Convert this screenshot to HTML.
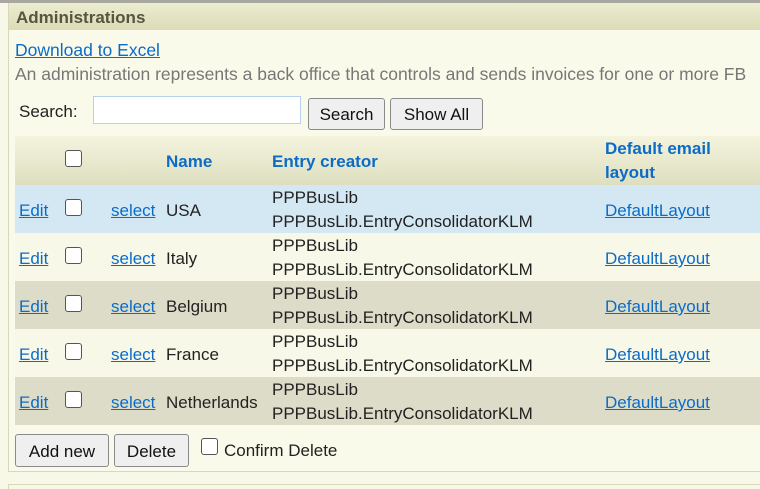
<!DOCTYPE html>
<html><head><style>
body{margin:0;width:760px;height:488px;overflow:hidden;background:#f8f8e8;font-family:"Liberation Sans",sans-serif;font-size:17px;color:#222;position:relative}
.a{position:absolute;white-space:nowrap}
.lk{color:#0b6cc8;text-decoration:underline}
.btn{position:absolute;background:#efefef;border:1px solid #8a8a8a;border-radius:3px;font-size:17px;color:#111;text-align:center;box-sizing:border-box}
.cb{position:absolute;width:17px;height:17px;border:1px solid #555;border-radius:3px;background:#fff;box-sizing:border-box}
.row{position:absolute;left:15px;width:745px;height:48px}
.h{color:#0b6cc8;font-weight:bold}
</style></head><body>
<div class="a" style="left:0;top:0;width:760px;height:3px;background:#a8a8a0"></div>
<div class="a" style="left:8px;top:3px;width:752px;height:468px;border-left:1px solid #d8d8b8;border-bottom:1px solid #d8d8b8;background:#fafaea"></div>
<div class="a" style="left:9px;top:3px;width:751px;height:27px;background:linear-gradient(#ececd0,#dcdcb8)"></div>
<div class="a" style="left:16px;top:8px;font-weight:bold;color:#555540;font-size:17px">Administrations</div>
<div class="a lk" style="left:15px;top:40px;font-size:17.5px">Download to Excel</div>
<div class="a" style="left:15px;top:64px;color:#777;font-size:17.5px">An administration represents a back office that controls and sends invoices for one or more FB</div>
<div class="a" style="left:19px;top:102px">Search:</div>
<div class="a" style="left:93px;top:96px;width:208px;height:28px;border:1px solid #b8d0f0;background:#fff;box-sizing:border-box"></div>
<div class="btn" style="left:308px;top:98px;width:77px;height:32px;line-height:32px">Search</div>
<div class="btn" style="left:390px;top:98px;width:93px;height:32px;line-height:32px">Show All</div>
<div class="row" style="top:136px;height:49px;background:linear-gradient(#f4f4de,#dedec0)"></div>
<div class="cb" style="left:65px;top:150px"></div>
<div class="a h" style="left:166px;top:152px">Name</div>
<div class="a h" style="left:272px;top:152px">Entry creator</div>
<div class="a h" style="left:605px;top:137px;line-height:24px">Default email<br>layout</div>

<div class="row" style="top:185px;background:#d4e8f4"></div>
<div class="row" style="top:233px;background:#f8f8e8"></div>
<div class="row" style="top:281px;background:#dcdcc8"></div>
<div class="row" style="top:329px;background:#f8f8e8"></div>
<div class="row" style="top:377px;background:#dcdcc8"></div>

<div class="a lk" style="left:19px;top:201px">Edit</div><div class="cb" style="left:65px;top:199px"></div><div class="a lk" style="left:111px;top:201px">select</div><div class="a" style="left:166px;top:201px">USA</div><div class="a" style="left:272px;top:186px;line-height:24px">PPPBusLib<br>PPPBusLib.EntryConsolidatorKLM</div><div class="a lk" style="left:605px;top:201px">DefaultLayout</div>
<div class="a lk" style="left:19px;top:249px">Edit</div><div class="cb" style="left:65px;top:247px"></div><div class="a lk" style="left:111px;top:249px">select</div><div class="a" style="left:166px;top:249px">Italy</div><div class="a" style="left:272px;top:234px;line-height:24px">PPPBusLib<br>PPPBusLib.EntryConsolidatorKLM</div><div class="a lk" style="left:605px;top:249px">DefaultLayout</div>
<div class="a lk" style="left:19px;top:297px">Edit</div><div class="cb" style="left:65px;top:295px"></div><div class="a lk" style="left:111px;top:297px">select</div><div class="a" style="left:166px;top:297px">Belgium</div><div class="a" style="left:272px;top:282px;line-height:24px">PPPBusLib<br>PPPBusLib.EntryConsolidatorKLM</div><div class="a lk" style="left:605px;top:297px">DefaultLayout</div>
<div class="a lk" style="left:19px;top:345px">Edit</div><div class="cb" style="left:65px;top:343px"></div><div class="a lk" style="left:111px;top:345px">select</div><div class="a" style="left:166px;top:345px">France</div><div class="a" style="left:272px;top:330px;line-height:24px">PPPBusLib<br>PPPBusLib.EntryConsolidatorKLM</div><div class="a lk" style="left:605px;top:345px">DefaultLayout</div>
<div class="a lk" style="left:19px;top:393px">Edit</div><div class="cb" style="left:65px;top:391px"></div><div class="a lk" style="left:111px;top:393px">select</div><div class="a" style="left:166px;top:393px">Netherlands</div><div class="a" style="left:272px;top:378px;line-height:24px">PPPBusLib<br>PPPBusLib.EntryConsolidatorKLM</div><div class="a lk" style="left:605px;top:393px">DefaultLayout</div>

<div class="btn" style="left:15px;top:434px;width:94px;height:33px;line-height:33px">Add new</div>
<div class="btn" style="left:114px;top:434px;width:75px;height:33px;line-height:33px">Delete</div>
<div class="cb" style="left:201px;top:438px"></div>
<div class="a" style="left:224px;top:441px">Confirm Delete</div>
<div class="a" style="left:8px;top:484px;width:752px;height:4px;border-top:1px solid #d8d8b8;border-left:1px solid #d8d8b8"></div>
</body></html>
